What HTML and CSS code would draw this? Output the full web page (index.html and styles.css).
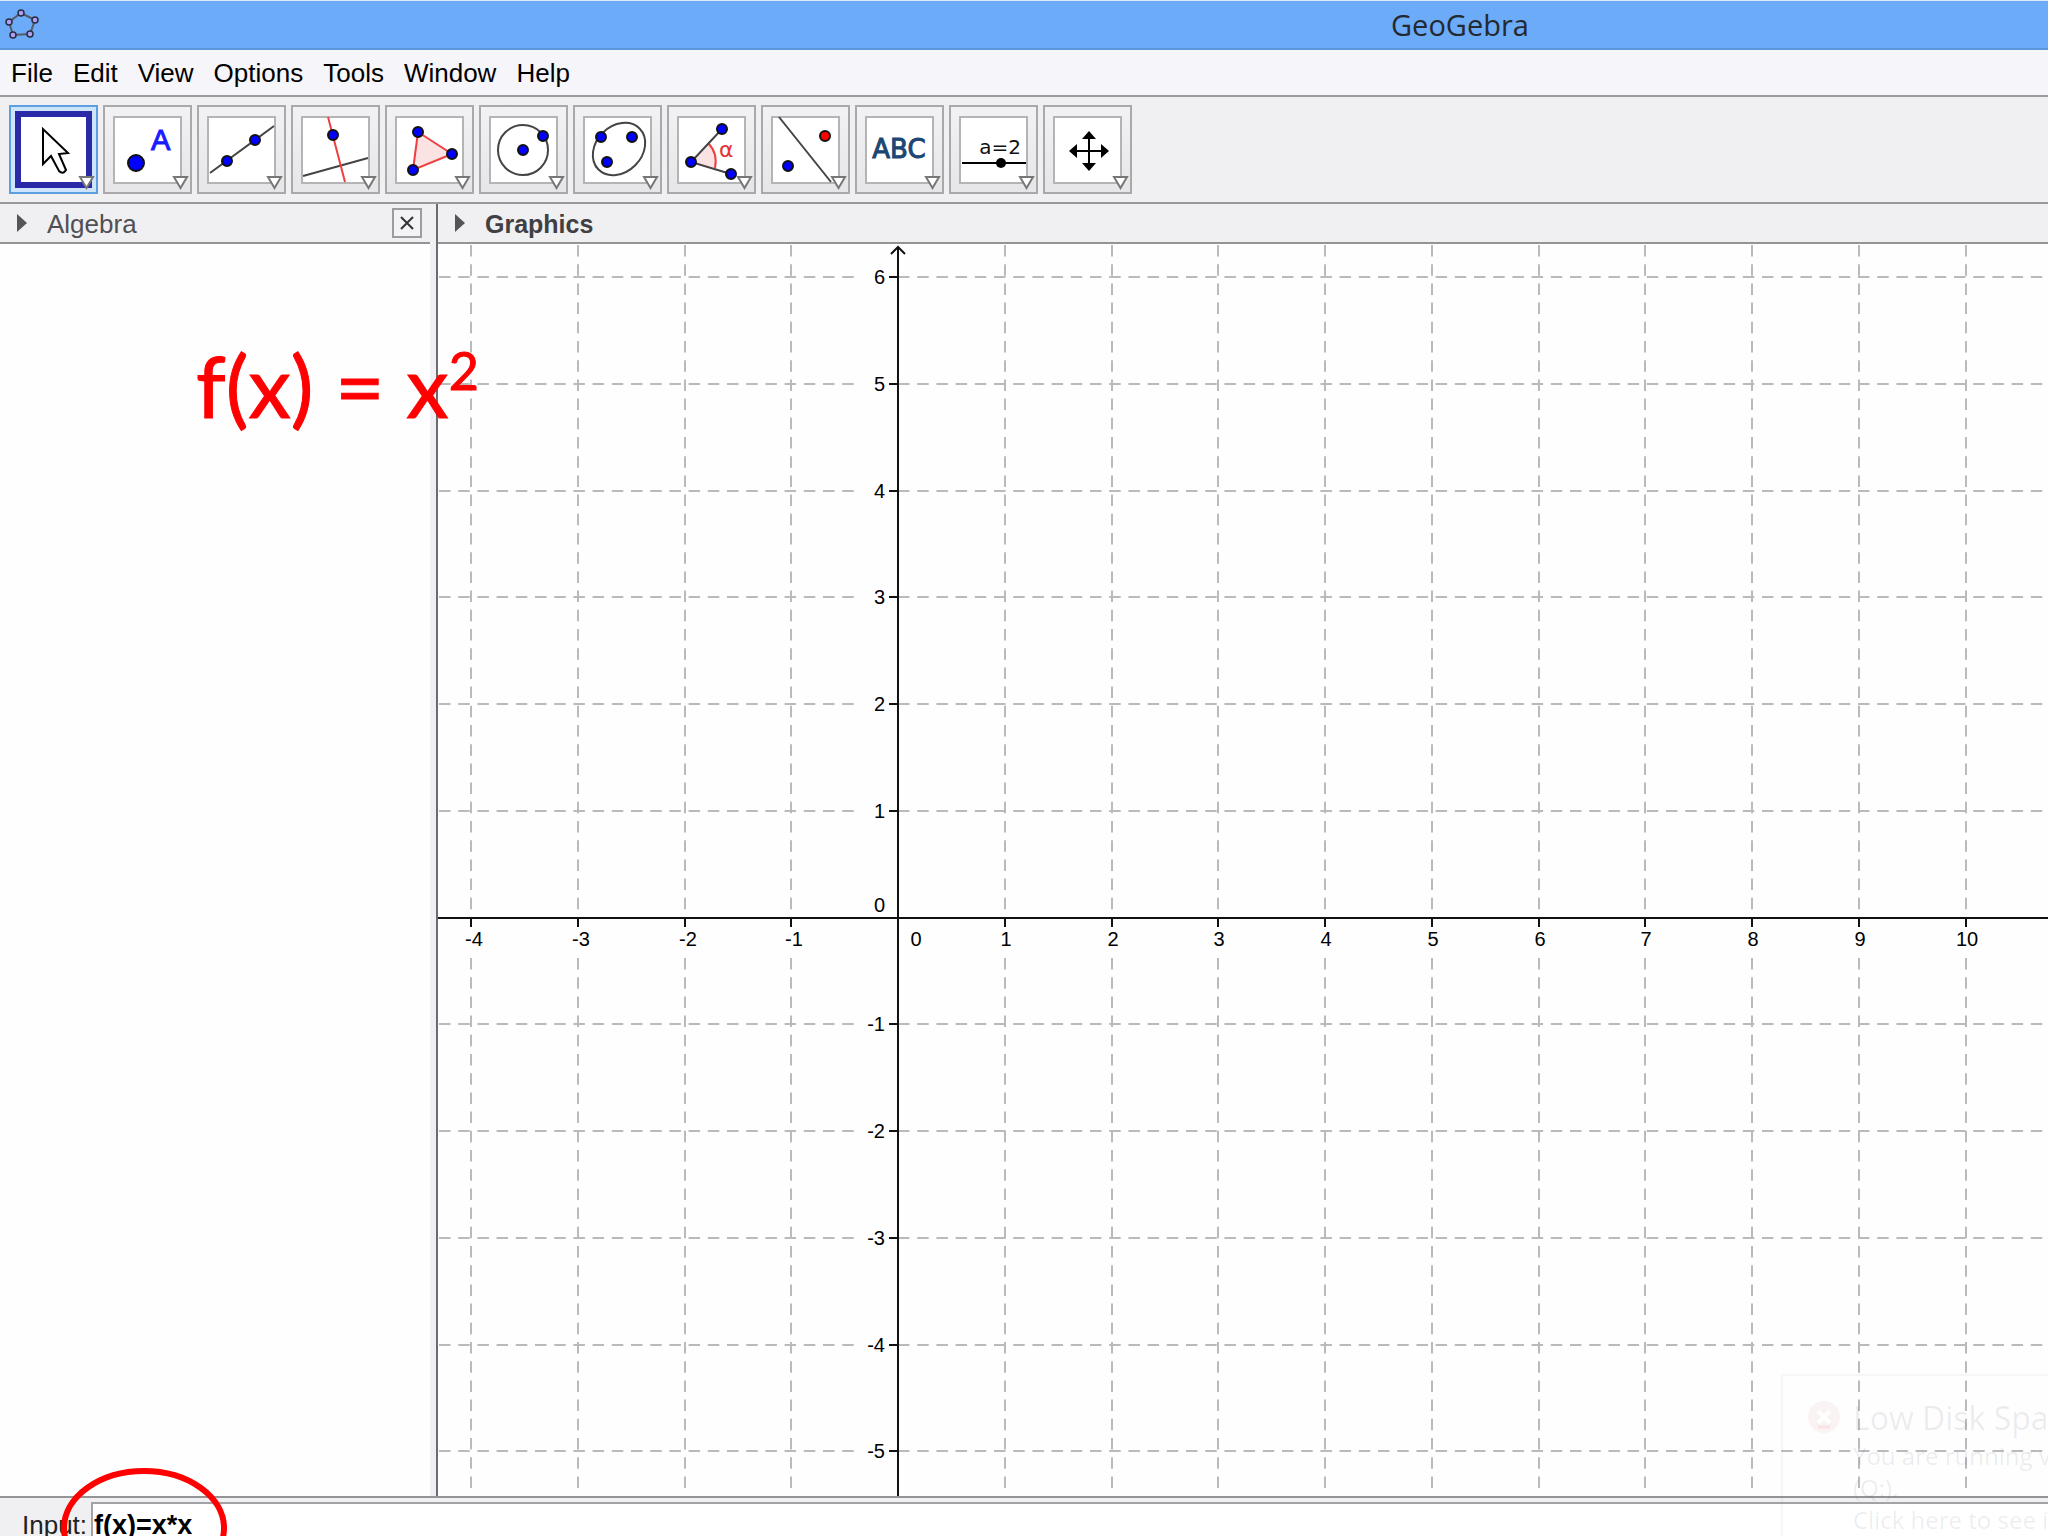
FILE: index.html
```html
<!DOCTYPE html>
<html lang="en">
<head>
<meta charset="utf-8">
<title>GeoGebra</title>
<link rel="stylesheet" href="styles.css">
</head>
<body>
<svg class="defs" width="0" height="0" aria-hidden="true">
  <defs>
    <symbol id="frame" viewBox="2 2 85 85">
      <rect x="11" y="12" width="67" height="66" fill="#fff" stroke="#b4b4b6" stroke-width="2"/>
    </symbol>
    <symbol id="more" viewBox="2 2 85 85">
      <path d="M71 72H84L77.500 83Z" fill="#fff" stroke="#777" stroke-width="2"/>
    </symbol>
  </defs>
</svg>
<div class="app">
  <header class="titlebar">
    <svg class="logo" viewBox="4 8 38 34" aria-hidden="true">
      <path d="M21 13L35 20L30 34L13 35L9 22Z" fill="none" stroke="#555a66" stroke-width="2"/>
      <g fill="#a9a3f2" stroke="#2c2c44" stroke-width="1.500">
        <circle cx="21" cy="13" r="3"/><circle cx="35" cy="20" r="3"/><circle cx="30" cy="34" r="3"/><circle cx="13" cy="35" r="3"/><circle cx="9" cy="22" r="3"/>
      </g>
    </svg>
    <h1 class="title">GeoGebra</h1>
  </header>

  <nav class="menubar" aria-label="Main menu">
    <button class="menu">File</button>
    <button class="menu">Edit</button>
    <button class="menu">View</button>
    <button class="menu">Options</button>
    <button class="menu">Tools</button>
    <button class="menu">Window</button>
    <button class="menu">Help</button>
  </nav>

  <div class="toolbar" role="toolbar">
    <button class="tool tool-active" aria-label="Move">
      <svg viewBox="2 2 85 85"><rect x="9" y="9" width="71" height="71" fill="#fff" stroke="#2a2aa8" stroke-width="6"/>
        <path d="M34 24V59L42 51L50 66Q54 70 57 65L50 49L59 48Z" fill="#fff" stroke="#000" stroke-width="2"/>
        <use href="#more" x="2" y="2" width="85" height="85"/></svg>
    </button>
    <button class="tool" aria-label="Point">
      <svg viewBox="2 2 85 85"><use href="#frame" x="2" y="2" width="85" height="85"/>
        <circle class="pt" cx="33" cy="58" r="8"/><text class="ic-a" x="48" y="45">A</text>
        <use href="#more" x="2" y="2" width="85" height="85"/></svg>
    </button>
    <button class="tool" aria-label="Line">
      <svg viewBox="2 2 85 85"><use href="#frame" x="2" y="2" width="85" height="85"/>
        <path class="ln" d="M13 68L77 21"/><circle class="pt" cx="30" cy="56" r="5"/><circle class="pt" cx="58" cy="35" r="5"/>
        <use href="#more" x="2" y="2" width="85" height="85"/></svg>
    </button>
    <button class="tool" aria-label="Perpendicular line">
      <svg viewBox="2 2 85 85"><use href="#frame" x="2" y="2" width="85" height="85"/>
        <path class="ln" d="M12 71L77 53"/><path class="red" d="M37 12L54 77"/><circle class="pt" cx="42" cy="30" r="5"/>
        <use href="#more" x="2" y="2" width="85" height="85"/></svg>
    </button>
    <button class="tool" aria-label="Polygon">
      <svg viewBox="2 2 85 85"><use href="#frame" x="2" y="2" width="85" height="85"/>
        <path class="red area" d="M33 27L67 49L28 65Z"/><circle class="pt" cx="33" cy="27" r="5"/><circle class="pt" cx="67" cy="49" r="5"/><circle class="pt" cx="28" cy="65" r="5"/>
        <use href="#more" x="2" y="2" width="85" height="85"/></svg>
    </button>
    <button class="tool" aria-label="Circle">
      <svg viewBox="2 2 85 85"><use href="#frame" x="2" y="2" width="85" height="85"/>
        <circle class="ln" cx="44" cy="45" r="25"/><circle class="pt" cx="44" cy="45" r="5"/><circle class="pt" cx="64" cy="31" r="5"/>
        <use href="#more" x="2" y="2" width="85" height="85"/></svg>
    </button>
    <button class="tool" aria-label="Ellipse">
      <svg viewBox="2 2 85 85"><use href="#frame" x="2" y="2" width="85" height="85"/>
        <ellipse class="ln" cx="46" cy="44" rx="29" ry="23" transform="rotate(-45 46 44)"/><circle class="pt" cx="28" cy="32" r="5"/><circle class="pt" cx="59" cy="32" r="5"/><circle class="pt" cx="34" cy="57" r="5"/>
        <use href="#more" x="2" y="2" width="85" height="85"/></svg>
    </button>
    <button class="tool" aria-label="Angle">
      <svg viewBox="2 2 85 85"><use href="#frame" x="2" y="2" width="85" height="85"/>
        <path class="area" d="M24 57L41 38Q51 48 48 63Z"/><path class="red" d="M41 38Q51 48 48 63"/><path class="ln" d="M55 24L24 57L64 69"/>
        <text class="ic-alpha" x="52" y="52">α</text>
        <circle class="pt" cx="55" cy="24" r="5"/><circle class="pt" cx="24" cy="57" r="5"/><circle class="pt" cx="64" cy="69" r="5"/>
        <use href="#more" x="2" y="2" width="85" height="85"/></svg>
    </button>
    <button class="tool" aria-label="Reflect">
      <svg viewBox="2 2 85 85"><use href="#frame" x="2" y="2" width="85" height="85"/>
        <path class="ln" d="M18 12L70 77"/><circle class="pt pt-red" cx="64" cy="31" r="5"/><circle class="pt" cx="27" cy="61" r="5"/>
        <use href="#more" x="2" y="2" width="85" height="85"/></svg>
    </button>
    <button class="tool" aria-label="Text">
      <svg viewBox="2 2 85 85"><use href="#frame" x="2" y="2" width="85" height="85"/>
        <text class="ic-abc" x="44" y="53">ABC</text>
        <use href="#more" x="2" y="2" width="85" height="85"/></svg>
    </button>
    <button class="tool" aria-label="Slider">
      <svg viewBox="2 2 85 85"><use href="#frame" x="2" y="2" width="85" height="85"/>
        <text class="ic-slider" x="51" y="49">a=2</text><path d="M13 58H77" stroke="#000" stroke-width="2"/><circle cx="52" cy="58" r="5"/>
        <use href="#more" x="2" y="2" width="85" height="85"/></svg>
    </button>
    <button class="tool" aria-label="Move graphics view">
      <svg viewBox="2 2 85 85"><use href="#frame" x="2" y="2" width="85" height="85"/>
        <path d="M46 30V62M30 46H62" stroke="#000" stroke-width="2"/>
        <path d="M46 26L53 34H39ZM46 66L53 58H39ZM26 46L34 39V53ZM66 46L58 39V53Z"/>
        <use href="#more" x="2" y="2" width="85" height="85"/></svg>
    </button>
  </div>

  <main class="views">
    <section class="algebra">
      <div class="viewhead">
        <svg class="tri" viewBox="0 0 10 18" aria-hidden="true"><path d="M0 0L10 9L0 18Z" fill="#555"/></svg>
        <h2 class="viewname">Algebra</h2>
        <button class="close" aria-label="Close"><svg viewBox="0 0 14 14"><path d="M1 1L13 13M13 1L1 13" stroke="#333" stroke-width="2"/></svg></button>
      </div>
      <div class="algebra-body"><p class="formula">f(x) = x<sup>2</sup></p></div>
    </section>
    <div class="splitter"></div>
    <section class="graphics">
      <div class="viewhead">
        <svg class="tri" viewBox="0 0 10 18" aria-hidden="true"><path d="M0 0L10 9L0 18Z" fill="#555"/></svg>
        <h2 class="viewname viewname-active">Graphics</h2>
      </div>
      <div class="plot-area"><svg class="plot" id="plot" role="img" aria-label="Coordinate plane"></svg></div>
    </section>
  </main>

  <footer class="inputbar">
    <label class="inputlabel" for="cmd">Input:</label>
    <input class="cmd" id="cmd" type="text" value="f(x)=x*x">
  </footer>

  <svg class="ring" viewBox="0 0 168 120" aria-hidden="true"><ellipse cx="84" cy="60" rx="80" ry="57" fill="none" stroke="#f00" stroke-width="6"/></svg>

  <aside class="toast">
    <svg class="toast-icon" viewBox="0 0 34 34" aria-hidden="true"><circle cx="17" cy="17" r="16" fill="#f9f3f4"/><path d="M11 11L23 23M23 11L11 23" stroke="#fff" stroke-width="4"/><path d="M11 27H23" stroke="#f6e2e5" stroke-width="3"/></svg>
    <div class="toast-text">
      <strong class="toast-title">Low Disk Spa</strong>
      <span>You are running v</span>
      <span>(Q:).</span>
      <span>Click here to see i</span>
    </div>
  </aside>
</div>
<script src="plot.js"></script>
</body>
</html>
```
FILE: styles.css
```css
* { box-sizing: border-box; }
html, body { margin: 0; height: 100%; }
body {
  background: #fff;
  color: #000;
  font: 26px/30px "Liberation Sans", Arial, sans-serif;
  overflow: hidden;
}
h1, h2, p { margin: 0; font-weight: normal; }
button, input { font: inherit; color: inherit; margin: 0; padding: 0; border: 0; background: none; }
.defs { position: absolute; }

.app {
  position: relative;
  height: 100vh;
  display: flex;
  flex-direction: column;
  overflow: hidden;
}

/* title bar */
.titlebar {
  flex: none;
  height: 50px;
  display: flex;
  align-items: center;
  padding-left: 4px;
  background: #6babf7;
  border-top: 1px solid #dbe8fa;
  border-bottom: 2px solid #5c97dc;
}
.logo { width: 38px; height: 34px; flex: none; }
.title {
  margin-left: 66%;
  font: 29px/36px "Open Sans", "Noto Sans", sans-serif;
  color: #24292f;
}

/* menu */
.menubar {
  flex: none;
  height: 47px;
  display: flex;
  align-items: center;
  gap: 20px;
  padding-left: 11px;
  background: #f6f5fa;
  border-bottom: 2px solid #9b9b9d;
}

/* tools */
.toolbar {
  flex: none;
  height: 107px;
  display: flex;
  gap: 5px;
  padding: 8px 9px;
  background: #f0eff1;
  border-bottom: 2px solid #999;
}
.tool {
  width: 89px;
  height: 89px;
  flex: none;
  border: 2px solid #a9a9ab;
  background: linear-gradient(#f2f1f3, #e6e5e7);
}
.tool svg { display: block; width: 85px; height: 85px; }
.tool-active { border-color: #5a9fe0; background: #cde4fb; }
.pt { fill: #00f; stroke: #111; stroke-width: 2; }
.pt-red { fill: #f00; }
.ln { fill: none; stroke: #444; stroke-width: 2; }
.red { fill: none; stroke: #ee4040; stroke-width: 2; }
.area { fill: #fbe3e3; }
.ic-a { font-size: 29px; fill: #1a1aff; stroke: #1a1aff; }
.ic-alpha { font: 22px "DejaVu Sans", sans-serif; fill: #e23434; }
.ic-abc { font: 26px "DejaVu Sans", sans-serif; fill: #1d4673; stroke: #1d4673; text-anchor: middle; }
.ic-slider { font: 20px "DejaVu Sans", sans-serif; fill: #111; text-anchor: middle; }

/* views */
.views { flex: 1; min-height: 0; display: flex; }
.algebra { flex: none; width: 430px; display: flex; flex-direction: column; }
.splitter { flex: none; width: 8px; background: #f0eff3; border-right: 2px solid #6c6c6e; }
.graphics { flex: 1; min-width: 0; display: flex; flex-direction: column; }
.viewhead {
  flex: none;
  height: 40px;
  display: flex;
  align-items: center;
  gap: 20px;
  padding: 0 8px 0 17px;
  background: #f0eff1;
  border-bottom: 2px solid #949496;
}
.tri { width: 10px; height: 18px; flex: none; }
.viewname { padding-top: 2px; font-size: 26px; line-height: 30px; color: #505054; }
.viewname-active { font-size: 25px; font-weight: bold; color: #404044; }
.close {
  width: 30px;
  height: 30px;
  margin-left: auto;
  display: grid;
  place-items: center;
  border: 2px solid #9c9c9e;
  background: #f3f2f4;
}
.close svg { width: 14px; height: 14px; }
.algebra-body { flex: 1; position: relative; background: #fefefe; }
.formula {
  position: absolute;
  z-index: 2;
  left: 196px;
  top: 91px;
  font: 85px/100px Lato, Carlito, sans-serif;
  color: #f00;
  -webkit-text-stroke: 1px #f00;
  white-space: nowrap;
}
.formula sup { font-size: 52px; line-height: 0; vertical-align: 28px; }

.plot-area { flex: 1; min-height: 0; background: #fefefe; }
.plot { display: block; width: 100%; height: 100%; overflow: hidden; }
.grid { stroke: #bcb9bd; stroke-width: 2; stroke-dasharray: 11.5 7.7; }
.axis { fill: none; stroke: #111; stroke-width: 2; }
.num { font-size: 20px; fill: #000; }
.num-x { text-anchor: middle; }
.num-y { text-anchor: end; }

/* command line */
.inputbar {
  flex: none;
  height: 40px;
  display: flex;
  gap: 4px;
  padding: 4px 0 0 22px;
  background: #f0eff2;
  border-top: 2px solid #949496;
  overflow: hidden;
}
.inputlabel { flex: none; line-height: 46px; color: #222; }
.cmd {
  flex: 1;
  min-width: 0;
  height: 46px;
  padding-left: 1px;
  border: 2px solid #a3a3a6;
  border-right: 0;
  background: #fff;
  font-size: 27px;
  font-weight: bold;
}

/* overlays */
.ring { position: absolute; left: 60px; bottom: -52px; width: 168px; height: 120px; z-index: 3; }
.toast {
  position: absolute;
  right: 0;
  bottom: 0;
  width: 267px;
  height: 162px;
  display: flex;
  gap: 12px;
  padding: 20px 0 0 24px;
  border: 2px solid rgba(90, 70, 110, 0.05);
  border-width: 2px 0 0 2px;
  overflow: hidden;
  white-space: nowrap;
  font: 24px/32px "Open Sans", "Noto Sans", sans-serif;
  color: rgba(60, 60, 90, 0.09);
}
.toast-icon { flex: none; width: 34px; height: 34px; margin-top: 4px; }
.toast-text { display: flex; flex-direction: column; }
.toast-title { font-size: 32px; line-height: 44px; font-weight: normal; }
```
FILE: plot.js
```js
// Draws the dashed grid, both axes and their numbers into the graphics view.
const plot = document.getElementById('plot');
const ORIGIN_X = 460, ORIGIN_Y = 674, UNIT = 106.75;

function add(name, attrs, text) {
  const el = document.createElementNS('http://www.w3.org/2000/svg', name);
  for (const key in attrs) el.setAttribute(key, attrs[key]);
  if (text !== undefined) el.textContent = text;
  plot.appendChild(el);
}
function line(cls, x1, y1, x2, y2) {
  add('line', { class: cls, x1, y1, x2, y2 });
}

function draw() {
  plot.textContent = '';
  const width = plot.clientWidth, height = plot.clientHeight;
  const xs = [], ys = [];
  for (let i = -4; ORIGIN_X + i * UNIT < width; i++) if (i) xs.push(i);
  for (let j = 6; ORIGIN_Y - j * UNIT < height; j--) if (j) ys.push(j);

  for (const i of xs) {
    const x = Math.round(ORIGIN_X + i * UNIT);
    line('grid', x, 1, x, ORIGIN_Y - 7);
    line('grid', x, ORIGIN_Y + 40, x, height - 4);
    line('axis', x, ORIGIN_Y, x, ORIGIN_Y + 9);
    add('text', { class: 'num num-x', x: i < 0 ? x + 3 : x + 1, y: ORIGIN_Y + 28 }, i);
  }
  for (const j of ys) {
    const y = Math.floor(ORIGIN_Y - j * UNIT);
    line('grid', 1, y, ORIGIN_X - 42, y);
    line('grid', ORIGIN_X, y, width, y);
    line('axis', ORIGIN_X - 9, y, ORIGIN_X, y);
    add('text', { class: 'num num-y', x: ORIGIN_X - 13, y: y + 7 }, j);
  }
  add('text', { class: 'num num-y', x: ORIGIN_X - 13, y: ORIGIN_Y - 6 }, 0);
  add('text', { class: 'num num-x', x: ORIGIN_X + 18, y: ORIGIN_Y + 28 }, 0);
  line('axis', 0, ORIGIN_Y, width, ORIGIN_Y);
  line('axis', ORIGIN_X, 3, ORIGIN_X, height);
  add('path', { class: 'axis', d: `M${ORIGIN_X - 7} 10L${ORIGIN_X} 3L${ORIGIN_X + 7} 10` });
}

draw();
window.addEventListener('resize', draw);
```
